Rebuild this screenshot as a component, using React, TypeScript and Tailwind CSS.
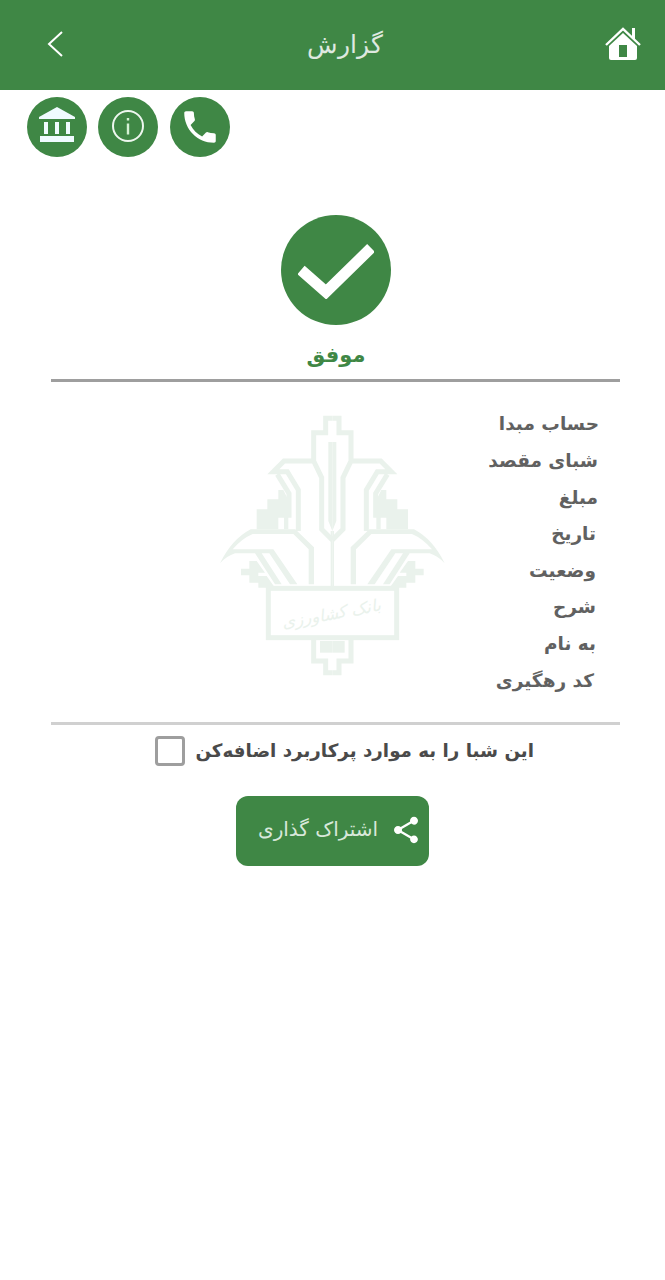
import React from "react";

const fields = [
  { label: "حساب مبدا", className: "pr-[66px]" },
  { label: "شبای مقصد", className: "pr-[67px]" },
  { label: "مبلغ", className: "pr-[67px]" },
  { label: "تاریخ", className: "pr-[69px]" },
  { label: "وضعیت", className: "pr-[69px]" },
  { label: "شرح", className: "pr-[69px]" },
  { label: "به نام", className: "pr-[69px]" },
  { label: "کد رهگیری", className: "pr-[71px]" },
];

const LogoHalf = () => (
  <>
    <path
      d="M367 37H347V80H311V165L335 215V370L367 402M311 165H222L190 197H232L265 252V375M202 205L237 262V335"
      fill="none"
      strokeWidth="15"
    />
    <path d="M140 370V310H172V280H205V252H220L235 282V370H222V335H205V370Z" />
    <path d="M30 472Q65 400 122 370H256L312 424V535H296V430L250 384H128Q95 398 68 430H190L262 535H240L178 442H155L215 535H195L135 442H75Q50 450 30 472Z" />
    <path d="M118 465H140L165 500H145V510H170L195 545H145V530H118V508H93V488H118Z" />
    <path d="M311 702V765H347V800H367" fill="none" strokeWidth="15" />
    <path d="M330 705H367V740H330Z" />
    <path d="M367 108H355V345L367 375Z" />
    <path d="M362 375H367V540H362Z" />
  </>
);

const BankLogo = () => (
  <svg viewBox="0 0 735 840" className="h-[280px] w-[245px]" fill="#eaf2ec" stroke="#eaf2ec" strokeWidth="0">
    <LogoHalf />
    <g transform="translate(734 0) scale(-1 1)">
      <LogoHalf />
    </g>
    <rect x="175" y="547" width="385" height="148" fill="none" strokeWidth="15" />
    <text
      x="365"
      y="640"
      textAnchor="middle"
      fontSize="50"
      fontStyle="italic"
      direction="rtl"
      fontFamily="'DejaVu Serif', serif"
      transform="rotate(-10 365 625)"
    >
      بانک کشاورزی
    </text>
  </svg>
);

const HomeIcon = () => (
  <svg viewBox="0 0 36 33" className="mb-[3px] h-[33px] w-[36px]">
    <path d="M18 6L32 19V31Q32 33 30 33H6Q4 33 4 31V19Z" fill="#fff" />
    <path d="M14 18H22V30H14Z" fill="#3f8745" />
    <path d="M1 18L18 2L35 18" fill="none" stroke="#fff" strokeWidth="2.4" />
    <path d="M27 1H30V14L27 11Z" fill="#fff" />
  </svg>
);

const RoundButton = ({ children, className }: { children: React.ReactNode; className?: string }) => (
  <div className={`flex h-[60px] w-[60px] items-center justify-center rounded-full bg-[#3f8745] ${className ?? ""}`}>
    {children}
  </div>
);

const App: React.FC = () => {
  return (
    <div dir="rtl" className="relative min-h-[1280px] bg-white font-['DejaVu_Sans',sans-serif]">
      {/* Header */}
      <header dir="ltr" className="flex h-[90px] items-center justify-between bg-[#3f8745] pl-[44px] pr-[24px]">
        <svg viewBox="0 0 20 26" className="mb-[3px] h-[26px] w-[20px]" fill="none" stroke="#fff" strokeWidth="2">
          <path d="M18 1L5 13L18 25" />
        </svg>
        <span dir="rtl" className="pl-[21px] text-[24.5px] font-light text-[#dfe9e0]">
          گزارش
        </span>
        <HomeIcon />
      </header>

      {/* Shortcuts */}
      <div dir="ltr" className="flex pl-[27px] pt-[7px]">
        <RoundButton>
          <svg viewBox="0 0 36 35" className="mb-[6px] h-[35px] w-[36px]" fill="#f0fbff">
            <path d="M18 0L36 10V12H0V10Z" />
            <path d="M5 15H9V27H5ZM16 15H20V27H16ZM27 15H31V27H27Z" />
            <path d="M1 29H35V35H1Z" />
          </svg>
        </RoundButton>
        <RoundButton className="ml-[11px]">
          <svg viewBox="0 0 32 32" className="mb-[2px] h-[32px] w-[32px]">
            <circle cx="16" cy="16" r="15" fill="none" stroke="#eef7ef" strokeWidth="2" />
            <path d="M14.8 13.5H17.2V24.5H14.8ZM14.8 8H17.2V10.5H14.8Z" fill="#d5f2d5" />
          </svg>
        </RoundButton>
        <RoundButton className="ml-[12px]">
          <svg viewBox="0 0 24 24" className="h-[42px] w-[42px]" fill="#fff">
            <path d="M6.62 10.79c1.44 2.83 3.76 5.14 6.59 6.59l2.2-2.2c.27-.27.67-.36 1.02-.24 1.12.37 2.33.57 3.57.57.55 0 1 .45 1 1V20c0 .55-.45 1-1 1-9.39 0-17-7.61-17-17 0-.55.45-1 1-1h3.5c.55 0 1 .45 1 1 0 1.25.2 2.45.57 3.57.11.35.03.74-.25 1.02l-2.2 2.2z" />
          </svg>
        </RoundButton>
      </div>

      {/* Status */}
      <div className="mt-[58px] flex flex-col items-center pl-[7px]">
        <div className="flex h-[110px] w-[110px] items-center justify-center rounded-full bg-[#3f8745]">
          <svg viewBox="0 0 76 56" className="mb-[-2px] h-[56px] w-[76px]" fill="none" stroke="#fff" strokeWidth="11">
            <path d="M3 27L28 49L73 5" />
          </svg>
        </div>
        <span className="mt-[11px] text-[21px] font-bold leading-[38px] text-[#3f8745]">موفق</span>
      </div>
      <div className="ml-[51px] mr-[45px] mt-[5px] h-[3px] bg-[#9e9e9e]" />

      {/* Fields */}
      <div className="relative mt-[24px] h-[316px]">
        <div dir="ltr" className="absolute left-[210px] top-0">
          <BankLogo />
        </div>
        <div className="relative">
          {fields.map((field) => (
            <div
              key={field.label}
              className={`flex h-[36.6px] items-center text-[18.5px] font-bold text-[#616161] ${field.className}`}
            >
              {field.label}
            </div>
          ))}
        </div>
      </div>
      <div className="ml-[51px] mr-[45px] h-[3px] bg-[#d0d0d0]" />

      {/* Save checkbox */}
      <div className="mt-[11px] flex h-[30px] items-center pr-[131px]">
        <span className="text-[18.3px] font-bold text-[#4a4a4a]">این شبا را به موارد پرکاربرد اضافه‌کن</span>
        <span className="mr-[10px] h-[30px] w-[30px] rounded-[4px] border-[3px] border-[#9e9e9e]" />
      </div>

      {/* Share */}
      <div dir="ltr" className="mt-[30px] pl-[236px]">
        <button className="flex h-[70px] w-[193px] items-center rounded-[12px] bg-[#3f8745] pl-[22px]">
          <span dir="rtl" className="mb-[4px] text-[20px] text-[#d8e8da]">
            اشتراک گذاری
          </span>
          <svg viewBox="0 0 24 24" className="mb-[2px] ml-[12px] h-[32px] w-[32px]" fill="#fff">
            <path d="M18 16.08c-.76 0-1.44.3-1.96.77L8.91 12.7c.05-.23.09-.46.09-.7s-.04-.47-.09-.7l7.05-4.11c.54.5 1.25.81 2.04.81 1.66 0 3-1.34 3-3s-1.34-3-3-3-3 1.34-3 3c0 .24.04.47.09.7L8.04 9.81C7.5 9.31 6.79 9 6 9c-1.66 0-3 1.34-3 3s1.34 3 3 3c.79 0 1.5-.31 2.04-.81l7.12 4.16c-.05.21-.08.43-.08.65 0 1.61 1.31 2.92 2.92 2.92 1.61 0 2.92-1.31 2.92-2.92s-1.31-2.92-2.92-2.92z" />
          </svg>
        </button>
      </div>
    </div>
  );
};

export default App;
